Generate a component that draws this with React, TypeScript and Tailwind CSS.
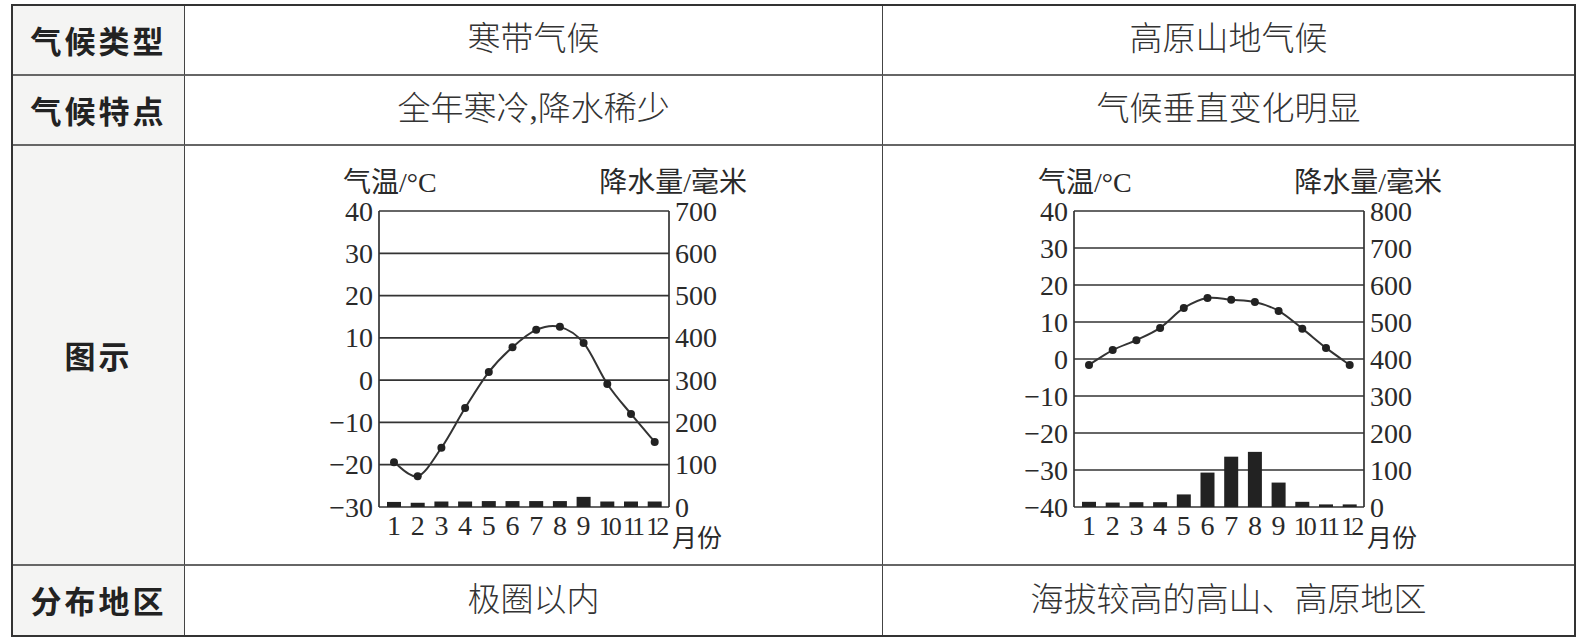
import React from "react";

interface ClimateChartProps {
  temps: number[];
  precip: number[];
  tMin: number;
  tMax: number;
  pMax: number;
}

const PLOT_LEFT = 75;
const PLOT_RIGHT = 365;
const PLOT_TOP = 51;
const PLOT_BOTTOM = 347;

function smoothPath(pts: [number, number][]) {
  let d = `M${pts[0][0]},${pts[0][1]}`;
  for (let i = 0; i < pts.length - 1; i++) {
    const p0 = pts[i - 1] || pts[i];
    const p1 = pts[i];
    const p2 = pts[i + 1];
    const p3 = pts[i + 2] || p2;
    const c1x = p1[0] + (p2[0] - p0[0]) / 6;
    const c1y = p1[1] + (p2[1] - p0[1]) / 6;
    const c2x = p2[0] - (p3[0] - p1[0]) / 6;
    const c2y = p2[1] - (p3[1] - p1[1]) / 6;
    d += ` C${c1x},${c1y} ${c2x},${c2y} ${p2[0]},${p2[1]}`;
  }
  return d;
}

function ClimateChart({ temps, precip, tMin, tMax, pMax }: ClimateChartProps) {
  const h = PLOT_BOTTOM - PLOT_TOP;
  const yT = (t: number) => PLOT_TOP + ((tMax - t) / (tMax - tMin)) * h;
  const xs = temps.map((_, i) => PLOT_LEFT + 15 + i * 23.7);
  const steps = (tMax - tMin) / 10;
  const ticks = Array.from({ length: steps + 1 }, (_, i) => i);
  const pStep = pMax / steps;
  const pts = temps.map((t, i) => [xs[i], yT(t)] as [number, number]);

  return (
    <svg
      width={460}
      height={394}
      viewBox="0 0 460 394"
      className="font-['Liberation_Serif','Noto_Sans_CJK_SC',serif] fill-[#2a2a2a]"
    >
      <text x={39} y={32} fontSize={28}>
        气温/°C
      </text>
      <text x={443} y={32} fontSize={28} textAnchor="end">
        降水量/毫米
      </text>

      {ticks.map((i) => {
        const y = PLOT_TOP + (i * h) / steps;
        const t = tMax - i * 10;
        return (
          <g key={i}>
            <line x1={PLOT_LEFT} x2={PLOT_RIGHT} y1={y} y2={y} stroke="#333" strokeWidth={1.7} />
            <text x={69} y={y + 9.5} fontSize={28} textAnchor="end">
              {t < 0 ? `\u2212${-t}` : t}
            </text>
            <text x={371} y={y + 9.5} fontSize={28}>
              {pMax - i * pStep}
            </text>
          </g>
        );
      })}
      <line x1={PLOT_LEFT} x2={PLOT_LEFT} y1={PLOT_TOP} y2={PLOT_BOTTOM} stroke="#333" strokeWidth={1.7} />
      <line x1={PLOT_RIGHT} x2={PLOT_RIGHT} y1={PLOT_TOP} y2={PLOT_BOTTOM} stroke="#333" strokeWidth={1.7} />

      {precip.map((p, i) => {
        const bh = (p / pMax) * h;
        return <rect key={i} x={xs[i] - 7} y={PLOT_BOTTOM - bh} width={14} height={bh} fill="#222" />;
      })}

      <path d={smoothPath(pts)} fill="none" stroke="#333" strokeWidth={2} />
      {pts.map((p, i) => (
        <circle key={i} cx={p[0]} cy={p[1]} r={4} fill="#222" />
      ))}

      {xs.map((x, i) =>
        i < 9 ? (
          <text key={i} x={x} y={375} fontSize={28} textAnchor="middle">
            {i + 1}
          </text>
        ) : (
          <text key={i} x={x + 1.5} y={375} fontSize={26} letterSpacing={-3} textAnchor="middle">
            {i + 1}
          </text>
        )
      )}
      <text x={368} y={387} fontSize={25}>
        月份
      </text>
    </svg>
  );
}

const labelCls =
  "flex items-center justify-center bg-[#f4f4f3] border-r border-[#444] font-['Noto_Sans_CJK_SC',sans-serif] font-bold text-[31px] tracking-[3px] text-[#222]";
const cellCls =
  "flex items-center justify-center font-['Liberation_Serif','Noto_Sans_CJK_SC',serif] font-light text-[33px] text-[#333]";

export default function App() {
  return (
    <div className="w-[1590px] h-[643px] bg-white pl-[11px] pt-[4px]">
      <div className="w-[1565px] h-[633px] border-2 border-[#333] grid grid-cols-[172px_698px_691px] grid-rows-[70px_70px_420px_69px]">
        <div className={`${labelCls} border-b-2 border-b-[#666]`}>气候类型</div>
        <div className={`${cellCls} border-r border-[#444] border-b-2 border-b-[#666]`}>寒带气候</div>
        <div className={`${cellCls} border-b-2 border-b-[#666]`}>高原山地气候</div>

        <div className={`${labelCls} border-b-2 border-b-[#666]`}>气候特点</div>
        <div className={`${cellCls} border-r border-[#444] border-b-2 border-b-[#666]`}>全年寒冷,降水稀少</div>
        <div className={`${cellCls} border-b-2 border-b-[#666]`}>气候垂直变化明显</div>

        <div className={`${labelCls} border-b-2 border-b-[#666]`}>图示</div>
        <div className="flex justify-center items-start pt-[14px] border-r border-[#444] border-b-2 border-b-[#666]">
          <ClimateChart
            temps={[-19.4, -22.7, -16, -6.6, 1.9, 7.8, 11.9, 12.6, 8.8, -0.9, -8, -14.6]}
            precip={[12, 10, 13, 13, 14, 14, 14, 14, 24, 13, 13, 13]}
            tMin={-30}
            tMax={40}
            pMax={700}
          />
        </div>
        <div className="flex justify-center items-start pt-[14px] border-b-2 border-b-[#666]">
          <ClimateChart
            temps={[-1.6, 2.4, 5.1, 8.4, 13.8, 16.5, 16, 15.4, 13, 8.2, 3, -1.6]}
            precip={[14, 12, 13, 13, 34, 93, 136, 149, 66, 14, 7, 7]}
            tMin={-40}
            tMax={40}
            pMax={800}
          />
        </div>

        <div className={labelCls}>分布地区</div>
        <div className={`${cellCls} border-r border-[#444]`}>极圈以内</div>
        <div className={cellCls}>海拔较高的高山、高原地区</div>
      </div>
    </div>
  );
}
